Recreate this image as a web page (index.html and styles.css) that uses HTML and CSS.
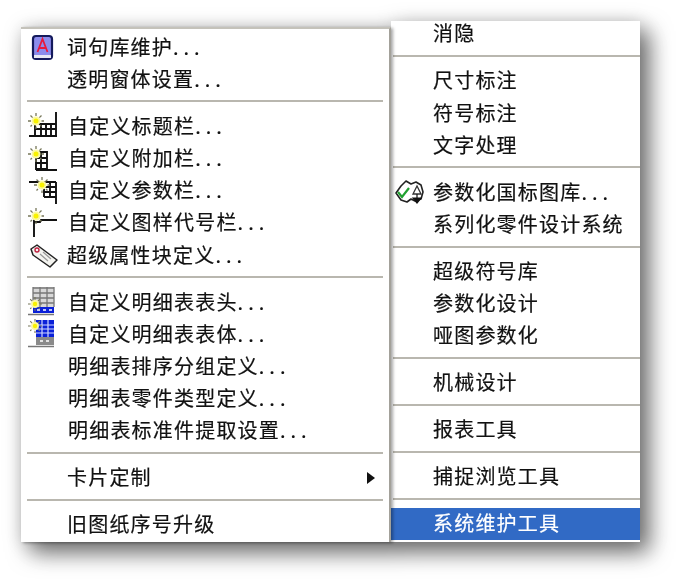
FILE: index.html
```html
<!DOCTYPE html>
<html lang="zh-CN">
<head>
<meta charset="UTF-8" />
<title>菜单</title>
<link rel="stylesheet" href="styles.css">
</head>
<body>

<svg class="defs" width="0" height="0">
  <symbol id="spark" viewBox="0 0 16 16">
    <path d="M8 0v16M0 8h16M2.500 2.500l11 11M13.500 2.500l-11 11" stroke="#77775a" stroke-width="1.300" stroke-dasharray="3 1.500"/>
    <circle cx="8" cy="8" r="4.500" fill="#fbf8a0"/>
    <circle cx="8" cy="8" r="2.500" fill="#f8f200"/>
  </symbol>
</svg>

<div class="menus">

  <!-- Left menu -->
  <div class="menu menu-left">
    <div class="item">
      <span class="ico">
        <svg width="30" height="30" viewBox="0 0 30 30">
          <rect x="5" y="4" width="19" height="23" rx="3" fill="#8c8cec" stroke="#141a5c" stroke-width="2.200"/>
          <path d="M6 23h17v3H6z" fill="#e8e8f4"/>
          <path d="M9.500 20l5-13 5 13M11.500 16h6" fill="none" stroke="#e8183c" stroke-width="1.800"/>
        </svg>
      </span>
      <span class="label">词句库维护<span class="dots">...</span></span>
    </div>
    <div class="item">
      <span class="ico"></span>
      <span class="label">透明窗体设置<span class="dots">...</span></span>
    </div>
    <div class="sep"></div>
    <div class="item">
      <span class="ico">
        <svg width="30" height="30" viewBox="0 0 30 30">
          <path d="M1 25h28M28 1v24M7 13h21M7 18h21M7 13v11M13 13v11M18 13v11M23 13v11" fill="none" stroke="#111" stroke-width="1.900"/>
          <use href="#spark" x="0" y="2" width="16" height="16"/>
        </svg>
      </span>
      <span class="label shift">自定义标题栏<span class="dots">...</span></span>
    </div>
    <div class="item">
      <span class="ico">
        <svg width="30" height="30" viewBox="0 0 30 30">
          <path d="M8 27h21M8 9h11v17H8zM8 15h11M8 20h11M13 9v17" fill="none" stroke="#111" stroke-width="1.900"/>
          <use href="#spark" x="0" y="3" width="16" height="16"/>
        </svg>
      </span>
      <span class="label shift">自定义附加栏<span class="dots">...</span></span>
    </div>
    <div class="item">
      <span class="ico">
        <svg width="30" height="30" viewBox="0 0 30 30">
          <path d="M1 6h13M28 6v22M16 6h12M16 11h12M16 16h12M16 21h12M16 6v15M22 6v15" fill="none" stroke="#111" stroke-width="1.900"/>
          <use href="#spark" x="6" y="1" width="16" height="16"/>
        </svg>
      </span>
      <span class="label shift">自定义参数栏<span class="dots">...</span></span>
    </div>
    <div class="item">
      <span class="ico">
        <svg width="30" height="30" viewBox="0 0 30 30">
          <path d="M6 8v21M6 14h6l1-2h16" fill="none" stroke="#111" stroke-width="1.900"/>
          <use href="#spark" x="0" y="0" width="16" height="16"/>
        </svg>
      </span>
      <span class="label shift">自定义图样代号栏<span class="dots">...</span></span>
    </div>
    <div class="item">
      <span class="ico">
        <svg width="30" height="30" viewBox="0 0 30 30">
          <path d="M3 9l6-4 20 15-7 7L5 15z" fill="#f4f4f0" stroke="#222" stroke-width="1.500" stroke-linejoin="round"/>
          <path d="M12 14l8 7M15 12l8 7" stroke="#999" stroke-width="1.200"/>
          <circle cx="9" cy="10" r="2" fill="none" stroke="#c02040" stroke-width="1.400"/>
        </svg>
      </span>
      <span class="label">超级属性块定义<span class="dots">...</span></span>
    </div>
    <div class="sep"></div>
    <div class="item">
      <span class="ico">
        <svg width="30" height="30" viewBox="0 0 30 30">
          <rect x="5" y="0" width="21" height="20" fill="#d8d8d8"/>
          <path d="M5 1h21M5 6h21M5 11h21M5 16h21M5 0v20M12 0v20M19 0v20M26 0v20" fill="none" stroke="#777" stroke-width="1.300"/>
          <rect x="5" y="20" width="21" height="6" fill="#0a20d8"/>
          <path d="M9 23h3M15 23h3M21 23h3" stroke="#fff" stroke-width="1.500"/>
          <path d="M0 27.500h26" stroke="#777" stroke-width="1.500"/>
          <use href="#spark" x="0" y="10" width="14" height="14"/>
        </svg>
      </span>
      <span class="label shift">自定义明细表表头<span class="dots">...</span></span>
    </div>
    <div class="item">
      <span class="ico">
        <svg width="30" height="30" viewBox="0 0 30 30">
          <rect x="8" y="1" width="18" height="17" fill="#0a20d8"/>
          <path d="M8 6h18M8 10h18M8 14h18M14 1v17M20 1v17" fill="none" stroke="#cfd6ff" stroke-width="1.200"/>
          <rect x="8" y="18" width="18" height="8" fill="#8a8a8a"/>
          <path d="M12 22h3M18 22h3" stroke="#fff" stroke-width="1.500"/>
          <path d="M0 27.500h26" stroke="#777" stroke-width="1.500"/>
          <use href="#spark" x="0" y="0" width="14" height="14"/>
        </svg>
      </span>
      <span class="label shift">自定义明细表表体<span class="dots">...</span></span>
    </div>
    <div class="item">
      <span class="ico"></span>
      <span class="label shift">明细表排序分组定义<span class="dots">...</span></span>
    </div>
    <div class="item">
      <span class="ico"></span>
      <span class="label shift">明细表零件类型定义<span class="dots">...</span></span>
    </div>
    <div class="item">
      <span class="ico"></span>
      <span class="label shift">明细表标准件提取设置<span class="dots">...</span></span>
    </div>
    <div class="sep"></div>
    <div class="item">
      <span class="ico"></span>
      <span class="label">卡片定制</span>
      <span class="arrow"></span>
    </div>
    <div class="sep"></div>
    <div class="item">
      <span class="ico"></span>
      <span class="label">旧图纸序号升级</span>
    </div>
  </div>

  <!-- Right menu -->
  <div class="menu menu-right">
    <div class="item item-cut"><span class="label">消隐</span></div>
    <div class="sep"></div>
    <div class="item"><span class="label">尺寸标注</span></div>
    <div class="item"><span class="label">符号标注</span></div>
    <div class="item"><span class="label">文字处理</span></div>
    <div class="sep"></div>
    <div class="item">
      <span class="ico">
        <svg width="32" height="30" viewBox="0 0 32 30">
          <path d="M1 16l5-7 5-5 5 3 5-2 5 3 2 7-2 7-6 2-4-2-4 3-6-2z" fill="#fff" stroke="#222" stroke-width="1.600" stroke-linejoin="round"/>
          <path d="M3 15l4 5 7-9" fill="none" stroke="#20a030" stroke-width="2.200"/>
          <path d="M22 9l-4 8h8z" fill="#fff" stroke="#333" stroke-width="1.300"/>
          <path d="M22 17v5M18 21h8l-4 5z" fill="#111" stroke="#111" stroke-width="1.200"/>
        </svg>
      </span>
      <span class="label">参数化国标图库<span class="dots">...</span></span>
    </div>
    <div class="item"><span class="label">系列化零件设计系统</span></div>
    <div class="sep"></div>
    <div class="item"><span class="label">超级符号库</span></div>
    <div class="item"><span class="label">参数化设计</span></div>
    <div class="item"><span class="label">哑图参数化</span></div>
    <div class="sep"></div>
    <div class="item"><span class="label">机械设计</span></div>
    <div class="sep"></div>
    <div class="item"><span class="label">报表工具</span></div>
    <div class="sep"></div>
    <div class="item"><span class="label">捕捉浏览工具</span></div>
    <div class="sep"></div>
    <div class="item selected"><span class="label">系统维护工具</span></div>
  </div>

</div>

</body>
</html>
```

FILE: styles.css
```css
* {
  box-sizing: border-box;
}
html, body {
  margin: 0;
  padding: 0;
  height: 584px;
  overflow: hidden;
  background: #fff;
}
body {
  font-family: "Noto Sans CJK SC", "Liberation Sans", sans-serif;
  font-size: 20px;
  letter-spacing: 1.200px;
  color: #111;
  -webkit-text-stroke: 0.2px;
}
.defs {
  position: absolute;
}

/* Both menus, shadow follows their outline */
.menus {
  display: flex;
  align-items: flex-end;
  width: 619px;
  height: 521px;
  margin: 21px 0 0 21px;
  filter: blur(0.4px) drop-shadow(9px 10px 11px rgba(0,0,0,0.55)) drop-shadow(0 0 9px rgba(0,0,0,0.14));
}
.menu {
  background: #fff;
}
.menu-left {
  position: relative;
  z-index: 1;
  width: 370px;
  height: 515px;
  padding-top: 2px;
  border-top: 2px solid #c4c2ba;
  border-right: 2px solid #a3a19a;
  box-shadow: 2px 1px 3px rgba(0,0,0,0.35);
}
.menu-right {
  width: 249px;
  height: 521px;
}

/* Rows */
.item {
  display: flex;
  align-items: center;
  height: 32.2px;
  white-space: nowrap;
}
.label {
  margin-top: -2px;
}
.menu-left .item {
  padding-left: 7px;
}
.menu-left .ico {
  width: 30px;
  height: 30px;
  margin-right: 9px;
  flex: none;
}
.menu-right .item {
  padding-left: 42px;
}
.menu-right .ico {
  width: 32px;
  height: 30px;
  margin-left: -38px;
  margin-right: 6px;
  flex: none;
}
.item svg {
  display: block;
}
.item-cut {
  height: 29px;
  padding-bottom: 5px;
}
.label.shift {
  margin-left: 1px;
}
.dots {
  letter-spacing: 5px;
}
.selected {
  height: 32px;
  background: #316ac5;
  color: #fff;
}

/* Submenu arrow */
.arrow {
  width: 0;
  height: 0;
  margin-left: auto;
  margin-right: 14px;
  border-left: 8px solid #111;
  border-top: 6px solid transparent;
  border-bottom: 6px solid transparent;
}

/* Separator */
.sep {
  height: 14.8px;
  padding-top: 5px;
}
.sep::before {
  content: "";
  display: block;
  height: 2px;
  background: #b9b7af;
}
.menu-left .sep {
  margin: 0 6px;
}
.menu-right .sep {
  margin-left: 2px;
}
```
